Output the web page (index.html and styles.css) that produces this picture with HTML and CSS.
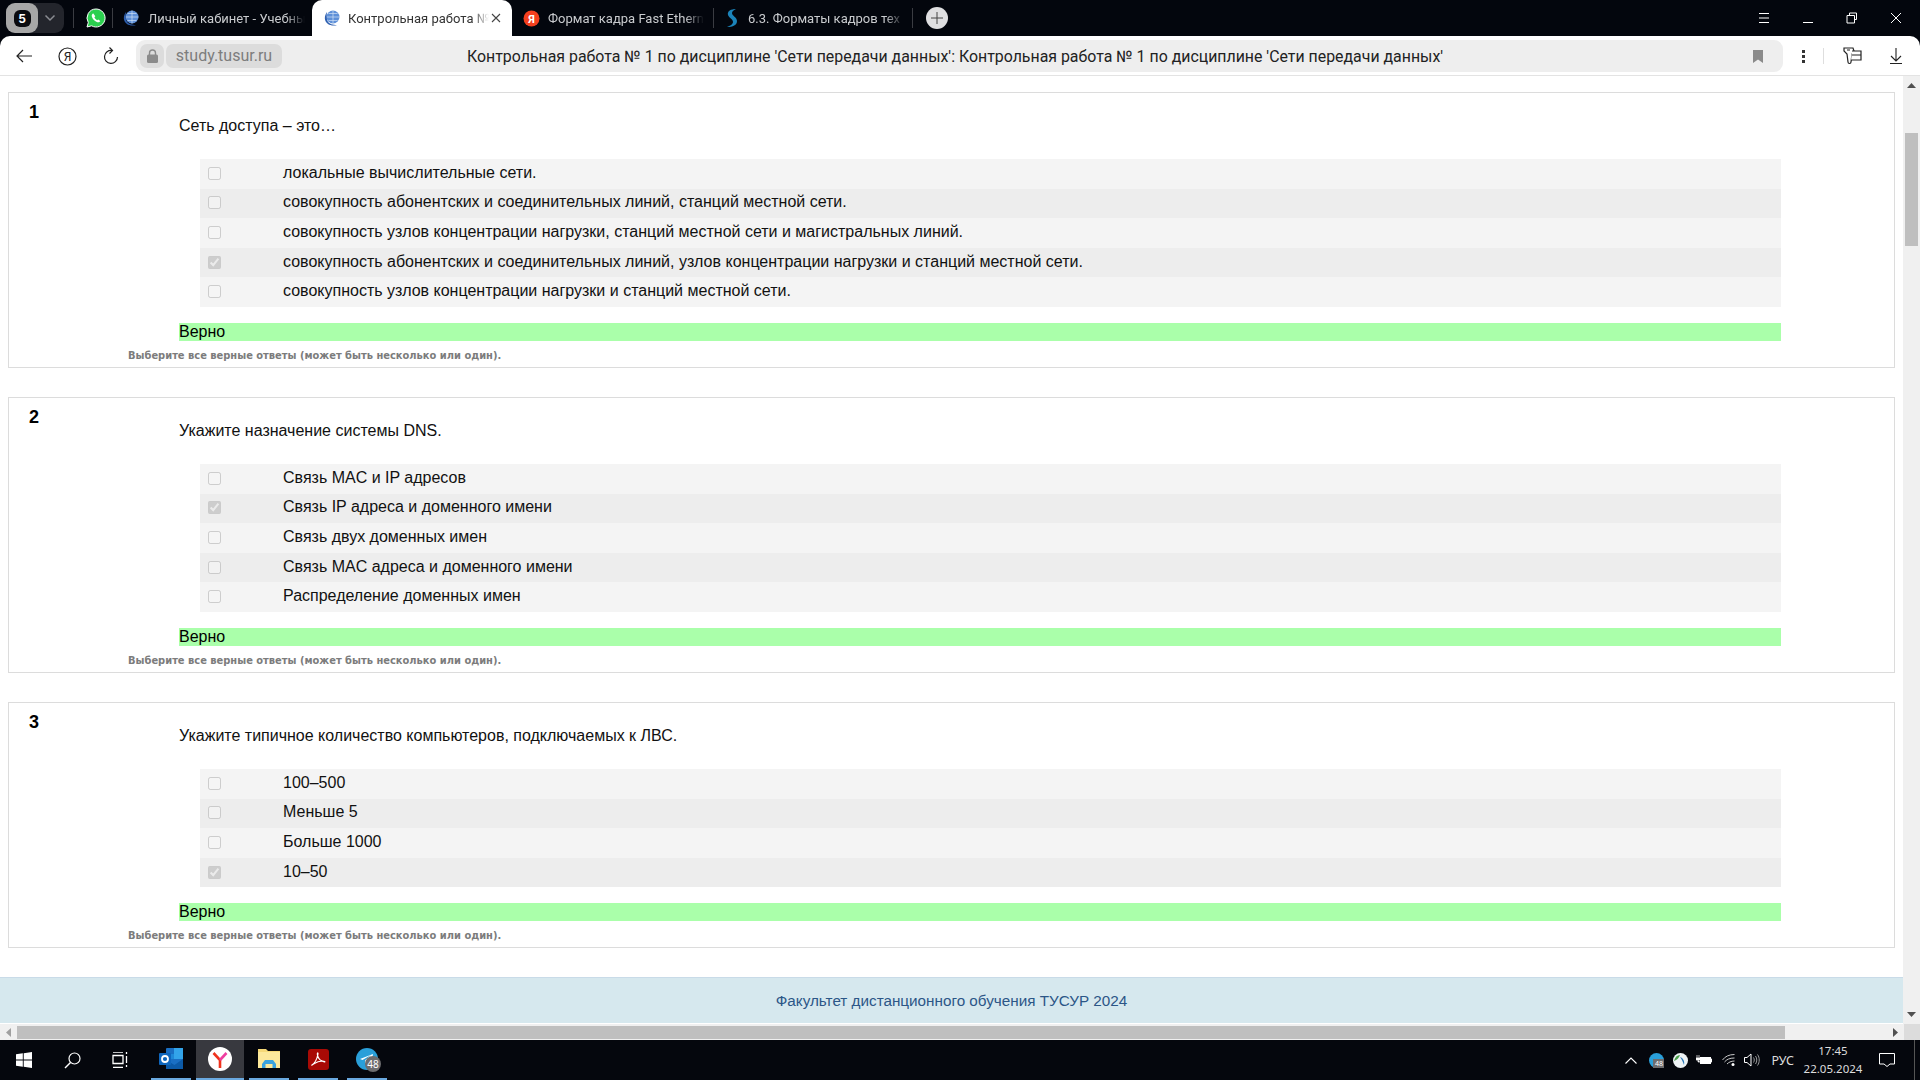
FILE: index.html
```html
<!DOCTYPE html>
<html lang="ru">
<head>
<meta charset="utf-8">
<title>Контрольная работа № 1</title>
<link rel="stylesheet" href="styles.css">
</head>
<body>
<div class="tabstrip">
  <div class="tabgroup">
    <div class="gbadge"><span class="gnum">5</span></div>
    <svg class="gchev" width="12" height="8" viewBox="0 0 12 8"><path d="M1.5 1.5 6 6l4.5-4.5" fill="none" stroke="#8a8c92" stroke-width="1.5"/></svg>
  </div>
  <i class="tsep sep1"></i>
  <div class="pin">
    <svg width="20" height="20" viewBox="0 0 20 20"><path d="M10 1a9 9 0 0 0-7.7 13.6L1 19l4.6-1.2A9 9 0 1 0 10 1z" fill="#2bd04f" stroke="#fff" stroke-width="1"/><path d="M7 5.500c-.9.500-1.500 1.500-1.200 3 .5 2.500 3 5 5.500 5.700 1.500.3 2.600-.3 3-1.300l-2-1.500-1 .8c-1.200-.4-2.400-1.700-2.900-2.900l.9-1L7.400 5.500z" fill="#fff"/></svg>
  </div>
  <i class="tsep"></i>
  <div class="tab tab1">
    <svg class="fav" width="17" height="17" viewBox="0 0 17 17"><circle cx="10" cy="7" r="6.500" fill="#5d8fd8"/><path d="M3.500 7h13M10 .5v13M5.500 3.500h9M5.500 10.500h9" stroke="#cfe0f7" stroke-width=".7"/><path d="M4 2C1 6 1 11 5 14c2 1.500 6 2 9 1-4 0-8-1-9.500-4C3.500 8 3.500 5 4 2z" fill="#2d5fb0"/></svg>
    <span class="tabtext w157">Личный кабинет - Учебны</span>
  </div>
  <div class="tab active">
    <svg class="fav" width="17" height="17" viewBox="0 0 17 17"><circle cx="10" cy="7" r="6.500" fill="#5d8fd8"/><path d="M3.500 7h13M10 .5v13M5.500 3.500h9M5.500 10.500h9" stroke="#cfe0f7" stroke-width=".7"/><path d="M4 2C1 6 1 11 5 14c2 1.500 6 2 9 1-4 0-8-1-9.500-4C3.500 8 3.500 5 4 2z" fill="#2d5fb0"/></svg>
    <span class="tabtext w141 dark">Контрольная работа №</span>
    <svg class="close" width="10" height="10" viewBox="0 0 10 10"><path d="M1 1l8 8M9 1 1 9" stroke="#444" stroke-width="1.100"/></svg>
  </div>
  <div class="tab tab3">
    <svg class="fav" width="17" height="17" viewBox="0 0 17 17"><circle cx="8.500" cy="8.500" r="8" fill="#f5401e"/><text x="8.500" y="13" class="yatext">Я</text></svg>
    <span class="tabtext w156">Формат кадра Fast Ethern</span>
  </div>
  <i class="tsep"></i>
  <div class="tab tab4">
    <svg class="fav" width="17" height="20" viewBox="0 0 17 20"><path d="M13 1C8 1 4 3 5 7c1 3 5 4 5 7 0 2-3 4-6 5 6 0 10-2 10-6 0-4-5-5-5-8 0-2 2-3 4-4z" fill="#1b83b9"/></svg>
    <span class="tabtext w156">6.3. Форматы кадров тех</span>
  </div>
  <i class="tsep"></i>
  <div class="plus"><svg width="12" height="12" viewBox="0 0 12 12"><path d="M6 0v12M0 6h12" stroke="#444" stroke-width="1"/></svg></div>
  <div class="winctl">
    <svg width="12" height="10" viewBox="0 0 12 10"><path d="M1 .5h10M1 5h10M1 9.500h10" stroke="#fff"/></svg>
    <svg width="12" height="10" viewBox="0 0 12 10"><path d="M1 9.500h10" stroke="#fff"/></svg>
    <svg width="12" height="12" viewBox="0 0 12 12"><path d="M3.500 3V1h7v6.500H8.500M1 3.500h7.500V11H1z" fill="none" stroke="#fff"/></svg>
    <svg width="12" height="12" viewBox="0 0 12 12"><path d="M1 1l10 10M11 1 1 11" stroke="#fff"/></svg>
  </div>
</div>

<div class="toolbar">
  <svg class="navback" width="16" height="14" viewBox="0 0 16 14"><path d="M7 1 1 7l6 6M1 7h15" fill="none" stroke="#222" stroke-width="1.200"/></svg>
  <svg class="navya" width="19" height="19" viewBox="0 0 19 19"><circle cx="9.500" cy="9.500" r="8.500" fill="none" stroke="#222" stroke-width="1.200"/><text x="9.500" y="14" class="yatext2">Я</text></svg>
  <svg class="navre" width="16" height="18" viewBox="0 0 16 18"><path d="M9 3.500A6.500 6.500 0 1 0 14.500 10" fill="none" stroke="#222" stroke-width="1.200"/><path d="M6.500.5 9.500 3.500 6.500 6.500" fill="none" stroke="#222" stroke-width="1.200"/></svg>
  <div class="addr">
    <div class="lockbox"><svg width="11" height="14" viewBox="0 0 11 14"><path d="M2.500 6V4a3 3 0 0 1 6 0v2" fill="none" stroke="#8b8b8b" stroke-width="1.400"/><rect y="5.500" width="11" height="8.500" rx="1.500" fill="#8b8b8b"/></svg></div>
    <div class="hostbox">study.tusur.ru</div>
    <div class="pagetitle">Контрольная работа № 1 по дисциплине 'Сети передачи данных': Контрольная работа № 1 по дисциплине 'Сети передачи данных'</div>
    <svg class="bookmark" width="10" height="13" viewBox="0 0 10 13"><path d="M0 0h10v13L5 9.500 0 13z" fill="#8a8a8a"/></svg>
  </div>
  <svg class="dots" width="3" height="13" viewBox="0 0 3 13"><path d="M0 0h3v3H0zM0 5h3v3H0zM0 10h3v3H0z" fill="#333"/></svg>
  <i class="barsep"></i>
  <svg class="sideicon" width="19" height="18" viewBox="0 0 19 18"><path d="M1 1h9l1 3v0l-2 3-1 8c0 2-3 2-3 0l-1-8-3-3z" fill="#fff" stroke="#222" stroke-width="1.200"/><path d="M9 4h9v9H8" fill="#fff" stroke="#222" stroke-width="1.200"/><path d="M9 8h9M4 3h3" stroke="#222" stroke-width="1.200"/></svg>
  <svg class="download" width="12" height="16" viewBox="0 0 12 16"><path d="M6 0v13M1 8l5 5 5-5M0 15.500h12" fill="none" stroke="#222" stroke-width="1.100"/></svg>
</div>

<div class="viewport">
  <main class="page">
    <section class="card">
      <div class="num">1</div>
      <div class="body">
        <p class="question">Сеть доступа – это…</p>
        <div class="answers">
          <label class="row"><input type="checkbox" disabled><span>локальные вычислительные сети.</span></label>
          <label class="row"><input type="checkbox" disabled><span>совокупность абонентских и соединительных линий, станций местной сети.</span></label>
          <label class="row"><input type="checkbox" disabled><span>совокупность узлов концентрации нагрузки, станций местной сети и магистральных линий.</span></label>
          <label class="row"><input type="checkbox" disabled checked><span>совокупность абонентских и соединительных линий, узлов концентрации нагрузки и станций местной сети.</span></label>
          <label class="row"><input type="checkbox" disabled><span>совокупность узлов концентрации нагрузки и станций местной сети.</span></label>
        </div>
        <div class="verdict">Верно</div>
      </div>
      <div class="note">Выберите все верные ответы (может быть несколько или один).</div>
    </section>
    <section class="card">
      <div class="num">2</div>
      <div class="body">
        <p class="question">Укажите назначение системы DNS.</p>
        <div class="answers">
          <label class="row"><input type="checkbox" disabled><span>Связь MAC и IP адресов</span></label>
          <label class="row"><input type="checkbox" disabled checked><span>Связь IP адреса и доменного имени</span></label>
          <label class="row"><input type="checkbox" disabled><span>Связь двух доменных имен</span></label>
          <label class="row"><input type="checkbox" disabled><span>Связь MAC адреса и доменного имени</span></label>
          <label class="row"><input type="checkbox" disabled><span>Распределение доменных имен</span></label>
        </div>
        <div class="verdict">Верно</div>
      </div>
      <div class="note">Выберите все верные ответы (может быть несколько или один).</div>
    </section>
    <section class="card">
      <div class="num">3</div>
      <div class="body">
        <p class="question">Укажите типичное количество компьютеров, подключаемых к ЛВС.</p>
        <div class="answers">
          <label class="row"><input type="checkbox" disabled><span>100–500</span></label>
          <label class="row"><input type="checkbox" disabled><span>Меньше 5</span></label>
          <label class="row"><input type="checkbox" disabled><span>Больше 1000</span></label>
          <label class="row"><input type="checkbox" disabled checked><span>10–50</span></label>
        </div>
        <div class="verdict">Верно</div>
      </div>
      <div class="note">Выберите все верные ответы (может быть несколько или один).</div>
    </section>
    <footer class="footer">Факультет дистанционного обучения ТУСУР 2024</footer>
  </main>
  <div class="vscroll">
    <svg width="9" height="5" viewBox="0 0 9 5"><path d="M4.500 0 9 5H0z" fill="#505050"/></svg>
    <div class="vthumb"></div>
    <svg class="vdown" width="9" height="5" viewBox="0 0 9 5"><path d="M0 0h9L4.500 5z" fill="#505050"/></svg>
  </div>
</div>

<div class="hscroll">
  <svg class="harrow" width="5" height="9" viewBox="0 0 5 9"><path d="M5 0v9L0 4.500z" fill="#a0a0a0"/></svg>
  <div class="hthumb"></div>
  <svg class="harrow2" width="5" height="9" viewBox="0 0 5 9"><path d="M0 0v9l5-4.500z" fill="#505050"/></svg>
  <div class="hcorner"></div>
</div>

<div class="taskbar">
  <div class="tb"><svg width="16" height="16" viewBox="0 0 16 16"><path d="M0 2.300 6.800 1.300v6.300H0zM7.700 1.200 16 0v7.600H7.700zM0 8.400h6.800v6.300L0 13.700zM7.700 8.400H16V16l-8.300-1.200z" fill="#fff"/></svg></div>
  <div class="tb"><svg width="17" height="17" viewBox="0 0 17 17"><circle cx="10.500" cy="6.500" r="5.500" fill="none" stroke="#fff" stroke-width="1.200"/><path d="M6.500 10.500 1 16" stroke="#fff" stroke-width="1.500"/></svg></div>
  <div class="tb"><svg width="17" height="16" viewBox="0 0 17 16"><path d="M1 0h10M1 15.500h10M1 3.500h10v8H1zM14.500 0v2M14.500 4v7M14.500 13v2" fill="none" stroke="#fff" stroke-width="1.300"/></svg></div>
  <div class="app app-first"><svg width="24" height="22" viewBox="0 0 24 22"><rect x="7" y="0" width="17" height="21" rx="1" fill="#1a6fc4"/><rect x="15" y="0" width="9" height="6" fill="#33a4ea"/><rect x="7" y="6" width="8" height="5" fill="#1e88d8"/><rect x="15" y="6" width="9" height="5" fill="#33a4ea"/><path d="M7 12l8.500 5L24 11v10H7z" fill="#0c5aa8"/><rect x="0" y="5" width="12" height="12" rx="1" fill="#0f66bd"/><circle cx="6" cy="11" r="3" fill="none" stroke="#fff" stroke-width="1.800"/></svg></div>
  <div class="app app-wide"><svg width="24" height="24" viewBox="0 0 24 24"><circle cx="12" cy="12" r="12" fill="#fff"/><path d="M12 21v-8L5.500 6" fill="none" stroke="#f0331d" stroke-width="2.600"/><path d="M12 13l6.500-7" fill="none" stroke="#ef3ea0" stroke-width="2.600"/></svg></div>
  <div class="app"><svg width="22" height="20" viewBox="0 0 22 20"><path d="M0 0h8l2 2h12v17H0z" fill="#f6d978"/><path d="M0 3h22v16H0z" fill="#fce89b"/><path d="M4 19v-4l3-4h8l3 4v4h-3.500v-4h-7v4z" fill="#3aa3e0"/></svg></div>
  <div class="app"><svg width="21" height="21" viewBox="0 0 21 21"><rect width="21" height="21" rx="3" fill="#a80a05"/><path d="M4 16c3-2 5-6 6-11 0-2-1-1-.5 1 .5 3 3 6 7 7 1 .2 0-1-2-1-3 0-6 1-9 3-1.500 1-2 1.500-1.500 1z" fill="none" stroke="#fff" stroke-width="1.200"/></svg></div>
  <div class="app">
    <div class="tgwrap">
      <svg width="22" height="22" viewBox="0 0 22 22"><circle cx="11" cy="11" r="11" fill="#2a9fd9"/><path d="M4 11l13-5-2 11-4-3-2 2v-3.500L15 7l-8.500 5z" fill="#fff"/></svg>
      <span class="tgbadge">48</span>
    </div>
  </div>
  <div class="tray">
    <svg class="t-chev" width="12" height="7" viewBox="0 0 12 7"><path d="M.5 6.500 6 1l5.500 5.500" fill="none" stroke="#fff" stroke-width="1.100"/></svg>
    <div class="tgmini"><span class="tgmini-b">48</span></div>
    <svg class="t-ball" width="15" height="15" viewBox="0 0 15 15"><circle cx="7.500" cy="7.500" r="7.500" fill="#eef3f5"/><path d="M1 8c1-4 3-6 6-6-1 3-3 5-6 6z" fill="#4aa04a"/><path d="M7 4c3 1 5 4 4 8-1-3-2-5-4-8z" fill="#2a79b8"/></svg>
    <svg class="t-batt" width="16" height="10" viewBox="0 0 16 10"><rect x="4" y="2" width="11" height="7" fill="#fff"/><path d="M15 4h1v3h-1M1 0v3M3 0v3M0 3h4v2H0zM2 5v2h2" fill="#fff" stroke="#fff" stroke-width=".7"/></svg>
    <svg class="t-wifi" width="13" height="12" viewBox="0 0 13 12"><path d="M.5 6C3 2.500 7 .5 12.500.5M2.500 8c2-2.500 5-4 10-4M5 10c1.500-1.500 4-3 7.500-3" fill="none" stroke="#c9c9c9" stroke-width="1"/><circle cx="11" cy="10.500" r="1.500" fill="#fff"/></svg>
    <svg class="t-sound" width="16" height="14" viewBox="0 0 16 14"><path d="M.5 4.500h2.500L7 1v12L3 9.500H.5z" fill="none" stroke="#fff"/><path d="M9.500 4.500c1 1.500 1 3.500 0 5M11.500 3c1.700 2.500 1.700 5.500 0 8M13.500 1.500c2.300 3 2.300 8 0 11" fill="none" stroke="#aaa" stroke-width=".9"/></svg>
    <span class="lang">РУС</span>
    <div class="clock"><span>17:45</span><span>22.05.2024</span></div>
    <svg class="t-note" width="16" height="14" viewBox="0 0 16 14"><path d="M.5.500h15v10.500h-4.500l-3 2.500-3-2.500H.5z" fill="none" stroke="#fff"/></svg>
    <i class="showdesk"></i>
  </div>
</div>
</body>
</html>
```
FILE: styles.css
```css
* { box-sizing: border-box; }
html, body { margin: 0; padding: 0; }
body {
  width: 1920px;
  height: 1080px;
  overflow: hidden;
  display: flex;
  flex-direction: column;
  background: #03060d;
  font-family: "Liberation Sans", Arial, sans-serif;
}
.tabstrip {
  height: 36px;
  flex: none;
  display: flex;
  align-items: center;
  background: #03060d;
  padding-left: 6px;
}
.tabgroup {
  width: 58px;
  height: 30px;
  border-radius: 9px;
  background: #23252c;
  display: flex;
  align-items: center;
  flex: none;
}
.gbadge {
  width: 32px;
  height: 30px;
  background: #a7a7a7;
  border-radius: 9px;
  display: flex;
  align-items: center;
  justify-content: center;
}
.gnum {
  width: 17px;
  height: 17px;
  background: #0a0a0e;
  border-radius: 6px;
  color: #fff;
  font: 700 12px/17px Inter, sans-serif;
  text-align: center;
}
.gchev { margin-left: 6px; }
.tsep { display: block; flex: none; width: 1px; height: 20px; background: #3a3c42; }
.sep1 { margin-left: 9px; }
.pin { width: 38px; padding-left: 6px; display: flex; justify-content: center; flex: none; }
.tab {
  height: 36px;
  width: 200px;
  padding-left: 11px;
  display: flex;
  align-items: center;
  flex: none;
  font: 13px/36px Roboto, sans-serif;
  color: #c9cbce;
}
.tab1 { width: 199px; padding-left: 9px; }
.tab1 .fav { margin-right: 9px; }
.tab3 { width: 201px; }
.tab4 { width: 198px; padding-left: 9px; }
.fav { flex: none; margin-right: 8px; }
.active {
  background: #fff;
  border-radius: 10px 10px 0 0;
  color: #333;
}
.tabtext {
  display: block;
  padding-top: 1px;
  white-space: nowrap;
  overflow: hidden;
  -webkit-mask-image: linear-gradient(to right, #000 88%, transparent);
  mask-image: linear-gradient(to right, #000 88%, transparent);
}
.w157 { width: 157px; }
.w156 { width: 156px; }
.w141 { width: 141px; }
.dark { color: #333; }
.close { margin-left: 2px; flex: none; }
.plus {
  width: 22px;
  height: 22px;
  border-radius: 50%;
  background: #dfdfe1;
  margin-left: 13px;
  display: flex;
  align-items: center;
  justify-content: center;
  flex: none;
}
.winctl {
  margin-left: auto;
  padding-right: 18px;
  display: flex;
  gap: 32px;
  align-items: center;
}
.toolbar {
  height: 40px;
  flex: none;
  background: #fff;
  border-radius: 10px 10px 0 0;
  border-bottom: 1px solid #e3e3e3;
  display: flex;
  align-items: center;
  padding-top: 1px;
}
.navback { margin-left: 16px; flex: none; }
.navya { margin-left: 26px; flex: none; }
.navre { margin-left: 26px; flex: none; }
.yatext { font: 700 11px Roboto, sans-serif; fill: #fff; text-anchor: middle; }
.yatext2 { font: 400 12px Roboto, sans-serif; fill: #222; text-anchor: middle; }
.addr {
  margin-left: 17px;
  width: 1647px;
  height: 32px;
  background: #eeeeee;
  border-radius: 9px;
  display: flex;
  align-items: center;
  padding-left: 4px;
  flex: none;
}
.lockbox {
  width: 24px;
  height: 24px;
  border-radius: 7px;
  background: #dcdcdc;
  display: flex;
  align-items: center;
  justify-content: center;
  flex: none;
}
.hostbox {
  margin-left: 2px;
  width: 116px;
  height: 24px;
  border-radius: 7px;
  background: #dcdcdc;
  color: #7d7d7d;
  font: 16px/24px Roboto, sans-serif;
  text-align: center;
  flex: none;
}
.pagetitle {
  margin-left: 185px;
  width: 974px;
  height: 32px;
  padding-top: 1px;
  flex: none;
  white-space: nowrap;
  color: #222;
  font: 15.900px/32px Roboto, sans-serif;
}
.bookmark { margin-left: 312px; flex: none; }
.dots { margin-left: 19px; flex: none; }
.barsep { display: block; width: 1px; height: 16px; background: #dedede; margin-left: 18px; flex: none; }
.sideicon { margin-left: 19px; flex: none; }
.download { margin-left: 28px; flex: none; }

.viewport {
  height: 948px;
  flex: none;
  display: flex;
  background: #fff;
}
.page {
  width: 1903px;
  height: 948px;
  padding-top: 16px;
  overflow: hidden;
  flex: none;
}
.card {
  margin: 0 8px 29px 8px;
  border: 1px solid #dcdcdc;
  display: grid;
  grid-template-columns: 170px 1602px 1fr;
  padding-bottom: 4px;
}
.num {
  font: 700 18px/21px "Liberation Sans", sans-serif;
  color: #000;
  padding: 9px 0 0 20px;
}
.body { min-width: 0; }
.question {
  margin: 23px 0 23px;
  font-size: 16px;
  line-height: 20px;
  color: #111;
}
.answers {
  margin-left: 21px;
  background: #f4f4f4;
}
.row {
  height: 29.600px;
  padding-bottom: 2px;
  display: flex;
  align-items: center;
  background: #f4f4f4;
  font-size: 16px;
  color: #111;
}
.row:nth-child(even) { background: #ededed; }
.row input {
  width: 13px;
  height: 13px;
  margin: 1px 0 0 8px;
  flex: none;
}
.row span { margin-left: 62px; }
.verdict {
  margin-top: 16px;
  height: 18px;
  background: #aaffaa;
  font-size: 16px;
  line-height: 18px;
  color: #000;
}
.note {
  grid-column: 1 / -1;
  margin-top: 8px;
  padding-left: 119px;
  height: 14px;
  font-family: "DejaVu Sans Condensed", "DejaVu Sans", sans-serif;
  font-stretch: condensed;
  font-weight: 700;
  font-size: 11px;
  line-height: 14px;
  color: #7c7c7c;
  white-space: nowrap;
}
.footer {
  height: 46px;
  background: #d6e8ee;
  border-top: 1px solid #c9dbe8;
  color: #2c5687;
  font-size: 15.250px;
  line-height: 45px;
  text-align: center;
}
.vscroll {
  width: 17px;
  height: 948px;
  background: #f0f0f0;
  display: flex;
  flex-direction: column;
  align-items: center;
  padding-top: 7px;
}
.vthumb { width: 13px; height: 113px; margin-top: 45px; background: #bfbfbf; }
.vdown { margin-top: auto; margin-bottom: 7px; }
.hscroll {
  height: 16px;
  flex: none;
  background: #f0f0f0;
  display: flex;
  align-items: center;
}
.harrow { margin-left: 6px; flex: none; }
.hthumb { width: 1768px; height: 13px; margin-left: 6px; background: #bfbfbf; flex: none; }
.harrow2 { margin-left: 108px; flex: none; }
.hcorner { width: 17px; height: 16px; margin-left: 6px; background: #dcdcdc; flex: none; }
.taskbar {
  height: 40px;
  flex: none;
  background: #05070d;
  display: flex;
  align-items: stretch;
}
.tb { width: 48px; display: flex; align-items: center; justify-content: center; flex: none; }
.app {
  width: 40px;
  margin-right: 9px;
  display: flex;
  align-items: center;
  justify-content: center;
  flex: none;
  border-bottom: 2px solid #6aa9e0;
}
.app-first { margin-left: 7px; margin-right: 5px; }
.app-wide { width: 48px; margin-right: 5px; background: #38393f; }
.tgwrap { position: relative; width: 22px; height: 22px; }
.tgbadge {
  position: absolute;
  left: 9px;
  top: 8px;
  width: 16px;
  height: 16px;
  border-radius: 50%;
  background: #6d6d6f;
  color: #fff;
  font: 10px/16px "Noto Sans", sans-serif;
  text-align: center;
}
.tray {
  margin-left: auto;
  display: flex;
  align-items: center;
  color: #fff;
  font-family: "Noto Sans", sans-serif;
}
.t-chev { flex: none; }
.tgmini {
  position: relative;
  width: 15px;
  height: 15px;
  margin-left: 12px;
  border-radius: 50%;
  background: #2a9fd9;
  flex: none;
}
.tgmini-b {
  position: absolute;
  left: 4px;
  top: 6px;
  width: 11px;
  height: 9px;
  background: #6d6d6f;
  font-size: 7px;
  line-height: 9px;
  text-align: center;
}
.t-ball { margin-left: 9px; flex: none; }
.t-batt { margin-left: 8px; flex: none; }
.t-wifi { margin-left: 10px; flex: none; }
.t-sound { margin-left: 9px; flex: none; }
.lang { margin-left: 11px; font-size: 12.500px; color: #ddd; flex: none; }
.clock {
  width: 56px;
  margin-left: 11px;
  display: flex;
  flex-direction: column;
  align-items: center;
  font-size: 11.500px;
  line-height: 18px;
  color: #ddd;
  flex: none;
}
.t-note { margin-left: 18px; flex: none; }
.showdesk { display: block; width: 1px; height: 40px; background: #555; margin-left: 19px; margin-right: 5px; flex: none; }
```
